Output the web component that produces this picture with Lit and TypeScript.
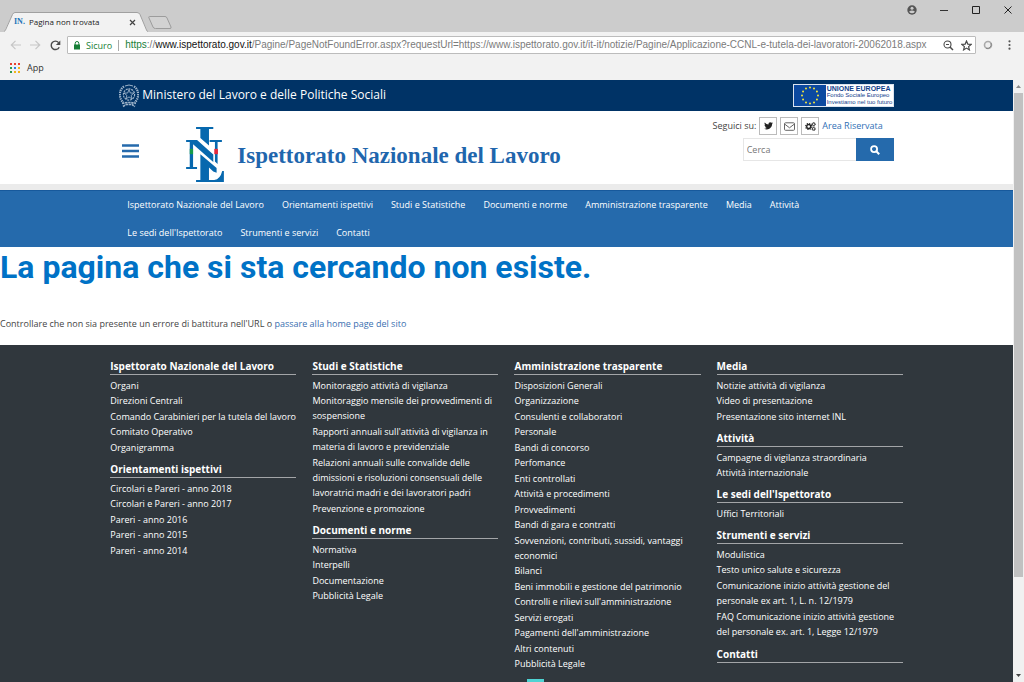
import { LitElement, html, css, svg } from "lit";
import { customElement } from "lit/decorators.js";
import { classMap } from "lit/directives/class-map.js";

type Section = { title: string; links: string[] };

const NAV = [
  "Ispettorato Nazionale del Lavoro",
  "Orientamenti ispettivi",
  "Studi e Statistiche",
  "Documenti e norme",
  "Amministrazione trasparente",
  "Media",
  "Attività",
  "Le sedi dell'Ispettorato",
  "Strumenti e servizi",
  "Contatti",
];

const COLUMNS: Section[][] = [
  [
    {
      title: "Ispettorato Nazionale del Lavoro",
      links: [
        "Organi",
        "Direzioni Centrali",
        "Comando Carabinieri per la tutela del lavoro",
        "Comitato Operativo",
        "Organigramma",
      ],
    },
    {
      title: "Orientamenti ispettivi",
      links: [
        "Circolari e Pareri - anno 2018",
        "Circolari e Pareri - anno 2017",
        "Pareri - anno 2016",
        "Pareri - anno 2015",
        "Pareri - anno 2014",
      ],
    },
  ],
  [
    {
      title: "Studi e Statistiche",
      links: [
        "Monitoraggio attività di vigilanza",
        "Monitoraggio mensile dei provvedimenti di sospensione",
        "Rapporti annuali sull'attività di vigilanza in materia di lavoro e previdenziale",
        "Relazioni annuali sulle convalide delle dimissioni e risoluzioni consensuali delle lavoratrici madri e dei lavoratori padri",
        "Prevenzione e promozione",
      ],
    },
    {
      title: "Documenti e norme",
      links: ["Normativa", "Interpelli", "Documentazione", "Pubblicità Legale"],
    },
  ],
  [
    {
      title: "Amministrazione trasparente",
      links: [
        "Disposizioni Generali",
        "Organizzazione",
        "Consulenti e collaboratori",
        "Personale",
        "Bandi di concorso",
        "Perfomance",
        "Enti controllati",
        "Attività e procedimenti",
        "Provvedimenti",
        "Bandi di gara e contratti",
        "Sovvenzioni, contributi, sussidi, vantaggi economici",
        "Bilanci",
        "Beni immobili e gestione del patrimonio",
        "Controlli e rilievi sull'amministrazione",
        "Servizi erogati",
        "Pagamenti dell'amministrazione",
        "Altri contenuti",
        "Pubblicità Legale",
      ],
    },
  ],
  [
    {
      title: "Media",
      links: [
        "Notizie attività di vigilanza",
        "Video di presentazione",
        "Presentazione sito internet INL",
      ],
    },
    {
      title: "Attività",
      links: ["Campagne di vigilanza straordinaria", "Attività internazionale"],
    },
    { title: "Le sedi dell'Ispettorato", links: ["Uffici Territoriali"] },
    {
      title: "Strumenti e servizi",
      links: [
        "Modulistica",
        "Testo unico salute e sicurezza",
        "Comunicazione inizio attività gestione del personale ex art. 1, L. n. 12/1979",
        "FAQ Comunicazione inizio attività gestione del personale ex. art. 1, Legge 12/1979",
      ],
    },
    { title: "Contatti", links: [] },
  ],
];

const APP_COLORS = [
  "#e8402f", "#e8402f", "#e8402f",
  "#2c9a4b", "#2f7de1", "#f3b51b",
  "#2c9a4b", "#f3b51b", "#f3b51b",
];

@customElement("browser-chrome")
export class BrowserChrome extends LitElement {
  static styles = css`
    :host {
      display: block;
      font: 9px/14px "Open Sans", sans-serif;
      color: #333;
    }
    button {
      display: flex;
      align-items: center;
      justify-content: center;
      padding: 0;
      border: 0;
      background: none;
      color: inherit;
      font: inherit;
    }
    svg {
      display: block;
    }
    .strip {
      display: flex;
      justify-content: space-between;
      height: 32px;
      background: #ccc;
    }
    .tabs {
      display: flex;
      align-items: flex-end;
      padding-left: 4px;
    }
    .tab {
      position: relative;
      display: flex;
      align-items: center;
      width: 144px;
      height: 20px;
      box-sizing: border-box;
      padding: 0 10px;
    }
    .shape {
      position: absolute;
      inset: 0;
    }
    .favicon,
    .title,
    .close {
      position: relative;
    }
    .favicon {
      width: 15px;
      font: bold 8px/14px "Liberation Serif", serif;
      color: #1c74b8;
    }
    .title {
      flex: 1;
      font-size: 8px;
      color: #222;
    }
    .close {
      width: 12px;
      height: 12px;
    }
    .new {
      height: 18px;
    }
    .window {
      display: flex;
    }
    .window button {
      width: 32px;
      height: 20px;
    }
    .toolbar {
      display: flex;
      align-items: center;
      padding: 4px 6px 3px 5px;
      background: #f2f2f2;
    }
    .tool {
      width: 20px;
      height: 18px;
    }
    .omnibox {
      flex: 1;
      min-width: 0;
      display: flex;
      align-items: center;
      height: 18px;
      box-sizing: border-box;
      margin-left: 2px;
      border: 1px solid #bcbcbc;
      border-radius: 1px;
      background: #fff;
    }
    .lock {
      padding: 0 6px;
    }
    .secure {
      padding-right: 6px;
      border-right: 1px solid #aaa;
      margin-right: 6px;
      line-height: 11px;
      color: #188038;
    }
    .url {
      flex: 1;
      min-width: 0;
      overflow: hidden;
      white-space: nowrap;
      outline: 0;
      font: 10px/16px "Liberation Sans", sans-serif;
      color: #7b7b7b;
    }
    .scheme {
      color: #188038;
    }
    .host {
      color: #111;
    }
    .inbox {
      width: 18px;
      height: 16px;
    }
    .ext {
      width: 24px;
      height: 18px;
    }
    .menu {
      width: 18px;
      height: 18px;
    }
    .bookmarks {
      display: flex;
      align-items: center;
      height: 21px;
      padding: 0 10px 2px;
      background: #f2f2f2;
    }
    .apps {
      gap: 7px;
    }
  `;

  render() {
    return html`
      <div class="strip">
        <div class="tabs">
          <div class="tab">
            <svg class="shape" width="144" height="20" viewBox="0 0 144 20">
              <path d="M0 20L8.500 2.500Q9.500 .5 11 .5H133Q135 .5 136 2.500L143 18.500L144 20Z" fill="#f2f2f2" />
              <path d="M0 19.500Q1 19 1.500 18L8.500 2.500Q9.500 .5 11 .5H133Q135 .5 136 2.500L142.500 18Q143 19.500 144 19.500" fill="none" stroke="#a0a0a0" />
            </svg>
            <span class="favicon">IN.</span>
            <span class="title">Pagina non trovata</span>
            <button class="close" aria-label="Chiudi scheda">
              <svg width="7" height="7" viewBox="0 0 7 7"><path d="M1 1L6 6M6 1L1 6" stroke="#444" stroke-width="1.200" /></svg>
            </button>
          </div>
          <button class="new" aria-label="Nuova scheda">
            <svg width="24" height="14" viewBox="0 0 24 14"><path d="M1.500 .5H17Q18.500 .5 19 2L23 11Q23.500 12.500 22 12.500H7.500Q5.500 12.500 5 11L1 2Q.3 .5 1.500 .5Z" fill="#d2d2d2" stroke="#9c9c9c" /></svg>
          </button>
        </div>
        <div class="window">
          <button aria-label="Profilo">
            <svg width="10" height="10" viewBox="0 0 10 10"><circle cx="5" cy="5" r="4.700" fill="#555" /><circle cx="5" cy="3.200" r="1.500" fill="#ccc" /><path d="M2 6.800Q5 4.300 8 6.800Q5 9.800 2 6.800Z" fill="#ccc" /></svg>
          </button>
          <button aria-label="Riduci a icona">
            <svg width="8" height="8" viewBox="0 0 8 8"><path d="M0 4.500H8" stroke="#333" /></svg>
          </button>
          <button aria-label="Ingrandisci">
            <svg width="8" height="8" viewBox="0 0 8 8"><path d="M.5 .5H7.500V7.500H.5Z" fill="none" stroke="#222" /></svg>
          </button>
          <button aria-label="Chiudi">
            <svg width="8" height="8" viewBox="0 0 8 8"><path d="M.5 .5L7.500 7.500M7.500 .5L.5 7.500" stroke="#222" /></svg>
          </button>
        </div>
      </div>
      <div class="toolbar">
        <button class="tool" aria-label="Indietro">
          <svg width="11" height="10" viewBox="0 0 11 10"><path d="M11 5H1.500M5.500 .8L1.300 5L5.500 9.200" fill="none" stroke="#c6c6c6" stroke-width="1.200" /></svg>
        </button>
        <button class="tool" aria-label="Avanti">
          <svg width="11" height="10" viewBox="0 0 11 10"><path d="M0 5H9.500M5.500 .8L9.700 5L5.500 9.200" fill="none" stroke="#c6c6c6" stroke-width="1.200" /></svg>
        </button>
        <button class="tool" aria-label="Ricarica">
          <svg width="11" height="11" viewBox="0 0 11 11"><path d="M9.200 7.200A4.200 4.200 0 1 1 8.600 2.600" fill="none" stroke="#4a4a4a" stroke-width="1.400" /><path d="M10.300 .5V4.900H5.900Z" fill="#4a4a4a" /></svg>
        </button>
        <div class="omnibox">
          <svg class="lock" width="6" height="9" viewBox="0 0 6 9"><path d="M0 3.500H6V8.500H0Z" fill="#188038" /><path d="M1.200 4V2.300A1.800 1.800 0 0 1 4.800 2.300V4" fill="none" stroke="#188038" /></svg>
          <span class="secure">Sicuro</span>
          <div class="url" role="textbox" aria-label="Indirizzo" tabindex="0"><span class="scheme">https</span>://<span class="host">www.ispettorato.gov.it</span>/Pagine/PageNotFoundError.aspx?requestUrl=https://www.ispettorato.gov.it/it-it/notizie/Pagine/Applicazione-CCNL-e-tutela-dei-lavoratori-20062018.aspx</div>
          <button class="inbox" aria-label="Zoom">
            <svg width="11" height="11" viewBox="0 0 11 11"><circle cx="4.500" cy="4.500" r="3.500" fill="none" stroke="#4a4a4a" stroke-width="1.100" /><path d="M7 7L10 10" stroke="#4a4a4a" stroke-width="1.500" /><path d="M3 4.500H6" stroke="#4a4a4a" /></svg>
          </button>
          <button class="inbox" aria-label="Preferiti">
            <svg width="11" height="11" viewBox="0 0 11 11"><path d="M5.500 1L6.800 4.100L10.200 4.400L7.600 6.600L8.400 9.900L5.500 8.100L2.600 9.900L3.400 6.600L.8 4.400L4.200 4.100Z" fill="none" stroke="#4a4a4a" stroke-width="1.200" /></svg>
          </button>
        </div>
        <button class="ext" aria-label="Estensione">
          <svg width="10" height="10" viewBox="0 0 10 10"><circle cx="5" cy="5" r="3.500" fill="#eee" stroke="#a9a9a9" stroke-width="1.600" /><path d="M8 3A4 4 0 0 1 3 8.300" fill="none" stroke="#858585" /></svg>
        </button>
        <button class="menu" aria-label="Menu">
          <svg width="3" height="10" viewBox="0 0 3 10"><circle cx="1.500" cy="1.300" r="1.100" fill="#555" /><circle cx="1.500" cy="5" r="1.100" fill="#555" /><circle cx="1.500" cy="8.700" r="1.100" fill="#555" /></svg>
        </button>
      </div>
      <div class="bookmarks">
        <button class="apps">
          <svg width="10" height="10" viewBox="0 0 10 10">
            ${APP_COLORS.map(
              (c, i) => svg`<rect x=${(i % 3) * 4} y=${Math.floor(i / 3) * 4} width="2" height="2" fill=${c} />`
            )}
          </svg>
          App
        </button>
      </div>
    `;
  }
}

@customElement("site-header")
export class SiteHeader extends LitElement {
  static styles = css`
    :host {
      display: block;
      font: 9px/14px "Open Sans", sans-serif;
    }
    a {
      color: inherit;
      text-decoration: none;
    }
    svg {
      display: block;
    }
    .ministry {
      background: #036;
    }
    .wrap {
      width: 80%;
      box-sizing: border-box;
      margin: 0 auto;
      padding: 0 18px;
      display: flex;
      justify-content: space-between;
      align-items: center;
    }
    .ministry .wrap {
      height: 31px;
    }
    .name {
      display: flex;
      align-items: center;
      gap: 3px;
      color: #fff;
      font-size: 12px;
      font-weight: 500;
    }
    .name span {
      padding-bottom: 2px;
    }
    .eu {
      display: flex;
      background: #fff;
      border: 1px solid #dbe4f0;
      color: #123f8c;
      font: 6px/7px "Liberation Sans", sans-serif;
    }
    .eulines {
      display: grid;
      width: 66px;
      padding-left: 1px;
      white-space: nowrap;
    }
    .eulines b {
      font-size: 7px;
    }
    .brand {
      border-bottom: 6px solid #ebebeb;
    }
    .brand .wrap {
      height: 73px;
      align-items: flex-start;
    }
    .left {
      display: flex;
      align-items: flex-start;
    }
    .burger {
      margin: 33px 47px 0 3px;
      padding: 0;
      border: 0;
      background: none;
    }
    .logo {
      display: flex;
      align-items: flex-start;
      gap: 13px;
      padding-top: 16px;
    }
    .logo span {
      padding-top: 16px;
      font: bold 23px/26px "Liberation Serif", serif;
      color: #1f66ad;
    }
    .right {
      display: flex;
      flex-direction: column;
      align-items: flex-end;
      gap: 3px;
      padding-top: 6px;
    }
    .follow {
      display: flex;
      align-items: center;
      gap: 3px;
      padding-right: 11px;
      color: #444;
    }
    .icon {
      display: flex;
      align-items: center;
      justify-content: center;
      width: 16px;
      height: 16px;
      border: 1px solid #bbb;
    }
    .area {
      color: #2f6fb5;
    }
    .search {
      display: flex;
    }
    .field {
      box-sizing: border-box;
      width: 113px;
      height: 23px;
      border: 1px solid #e6e6e6;
      border-right: 0;
      padding: 0 3px;
      font: inherit;
      color: #555;
    }
    .field::placeholder {
      color: #777;
    }
    .go {
      display: flex;
      align-items: center;
      justify-content: center;
      width: 38px;
      height: 23px;
      padding: 0;
      border: 0;
      background: #256aac;
    }
    .nav {
      background: #256aac;
      border-top: 1px solid #17599c;
      box-sizing: border-box;
    }
    .items {
      display: flex;
      flex-wrap: wrap;
      column-gap: 18px;
      width: 80%;
      box-sizing: border-box;
      margin: 0 auto;
      padding: 0 26px;
      color: #fff;
      font-weight: 500;
      line-height: 28px;
    }
  `;

  render() {
    const stars = Array.from({ length: 12 }, (_, i) => (i * Math.PI) / 6);
    return html`
      <div class="ministry">
        <div class="wrap">
          <a class="name" href="#">
            <svg width="20" height="24" viewBox="0 0 20 24" fill="none" stroke="#9db3c9">
              <circle cx="10" cy="10.500" r="5.600" stroke-width="1.200" stroke-dasharray="2 .8" />
              <path d="M10 5.500L11.300 9L15 9.100L12.100 11.400L13.100 15L10 12.900L6.900 15L7.900 11.400L5 9.100L8.700 9Z" stroke-width=".9" />
              <path d="M5 2.500C-.5 6 -.5 14.500 4.500 18.500M15 2.500C20.500 6 20.500 14.500 15.500 18.500" stroke-width="2.200" stroke-dasharray="1.400 .8" />
              <path d="M6 2Q10 0 14 2" />
              <path d="M3 19.500Q10 17.500 17 19.500M4 22.500L7 20.500H13L16 22.500" stroke-width="1.600" stroke-dasharray="2.500 .6" />
            </svg>
            <span>Ministero del Lavoro e delle Politiche Sociali</span>
          </a>
          <a class="eu" href="#">
            <svg width="32" height="21" viewBox="0 0 32 21">
              <rect width="32" height="21" fill="#0b49a0" />
              ${stars.map(
                (a) => svg`<circle cx=${16 + 8 * Math.sin(a)} cy=${10.5 - 8 * Math.cos(a)} r="1" fill="#f5e63c" />`
              )}
            </svg>
            <span class="eulines"><b>UNIONE EUROPEA</b><span>Fondo Sociale Europeo</span><span>Investiamo nel tuo futuro</span></span>
          </a>
        </div>
      </div>
      <div class="brand">
        <div class="wrap">
          <div class="left">
            <button class="burger" aria-label="Menu">
              <svg width="17" height="14" viewBox="0 0 17 14"><path d="M0 1.500H17M0 7H17M0 12.500H17" stroke="#256aac" stroke-width="2.400" /></svg>
            </button>
            <a class="logo" href="#">
              <svg width="38" height="55" viewBox="258 156 114 166">
                <g fill="#0768ae">
                  <path d="M288 156H340V162H327V212L301 189V162H288Z" />
                  <path d="M258 195H291L340 239V262L279 208V277H291V283H258V277H269V201H258Z" />
                  <path d="M329 195H366V201H353V268L345 260V201H329Z" />
                  <path d="M301 238L350 280V294L340 290L327 278V316H343Q361 314 367 289H372V322H288V316H301Z" />
                </g>
                <path d="M269 222H279V238H269Z" fill="#169b4a" />
                <path d="M343 222H354V238H343Z" fill="#e5293b" />
              </svg>
              <span>Ispettorato Nazionale del Lavoro</span>
            </a>
          </div>
          <div class="right">
            <div class="follow">
              <span>Seguici su:</span>
              <a class="icon" href="#" aria-label="Twitter">
                <svg width="9" height="8" viewBox="0 0 10 9"><path d="M0 7.500Q1.800 7.700 3 6.700Q1.500 6.500 1.100 5.200H2Q.5 4.600 .5 3L1.400 3.300Q0 2.100 .8 .6Q2.500 2.700 5 2.800Q4.700 .4 6.900 .3Q7.800 .3 8.400 .9L9.700 .4L8.900 1.600L10 1.300L9 2.400C9.200 6.500 4.500 10.200 0 7.500Z" fill="#222" /></svg>
              </a>
              <a class="icon" href="#" aria-label="Posta">
                <svg width="11" height="9" viewBox="0 0 11 9" fill="none" stroke="#666"><rect x=".5" y=".8" width="10" height="7.500" rx="1" /><path d="M.8 2.200L5.500 5.800L10.200 2.200" /></svg>
              </a>
              <a class="icon" href="#" aria-label="Servizi">
                <svg width="11" height="9" viewBox="0 0 12 10" fill="none" stroke="#222"><circle cx="4" cy="5" r="2.200" stroke-width="1.500" /><circle cx="4" cy="5" r="3.400" stroke-width="1.200" stroke-dasharray="1.400 1.270" /><circle cx="9.500" cy="2.500" r="1.400" /><circle cx="9.500" cy="2.500" r="2.100" stroke-width=".7" stroke-dasharray=".9 .75" /><circle cx="9.500" cy="7.600" r="1.400" /><circle cx="9.500" cy="7.600" r="2.100" stroke-width=".7" stroke-dasharray=".9 .75" /></svg>
              </a>
              <a class="area" href="#">Area Riservata</a>
            </div>
            <form class="search">
              <input class="field" type="search" placeholder="Cerca" aria-label="Cerca" />
              <button class="go" type="button" aria-label="Avvia ricerca">
                <svg width="10" height="10" viewBox="0 0 10 10"><circle cx="4.100" cy="4.100" r="3" fill="none" stroke="#fff" stroke-width="1.800" /><path d="M6.300 6.300L9.200 9.200" stroke="#fff" stroke-width="2" /></svg>
              </button>
            </form>
          </div>
        </div>
      </div>
      <nav class="nav">
        <div class="items">${NAV.map((n) => html`<a href="#">${n}</a>`)}</div>
      </nav>
    `;
  }
}

@customElement("site-footer")
export class SiteFooter extends LitElement {
  static styles = css`
    :host {
      display: block;
      background: #30373d;
      color: #fff;
      font: 9px/15px "Open Sans", sans-serif;
    }
    a {
      color: inherit;
      text-decoration: none;
    }
    .columns {
      display: grid;
      grid-template-columns: repeat(4, 1fr);
      column-gap: 16px;
      width: 80%;
      box-sizing: border-box;
      margin: 0 auto;
      padding: 13px 9px 8px;
    }
    .column {
      display: flex;
      flex-direction: column;
      gap: 6px;
    }
    .heading {
      margin: 0 0 3px;
      border-bottom: 1px solid #a3a5a8;
      font-size: 10px;
      font-weight: 700;
      line-height: 16px;
    }
    .list {
      margin: 0;
      padding: 0;
      list-style: none;
    }
    .item:nth-child(odd):not(:first-child) {
      margin-top: 1px;
    }
    .long {
      margin-bottom: 1px;
    }
    .badge {
      width: 17px;
      height: 20px;
      margin-left: 52%;
      background: #4fd3d3;
    }
  `;

  render() {
    return html`
      <div class="columns">
        ${COLUMNS.map(
          (sections) => html`<div class="column">
            ${sections.map(
              (s) => html`<section>
                <h2 class="heading"><a href="#">${s.title}</a></h2>
                <ul class="list">
                  ${s.links.map(
                    (l) => html`<li class=${classMap({ item: true, long: l.length > 52 })}><a href="#">${l}</a></li>`
                  )}
                </ul>
              </section>`
            )}
          </div>`
        )}
      </div>
      <div class="badge"></div>
    `;
  }
}

@customElement("app-root")
export class AppRoot extends LitElement {
  static styles = css`
    :host {
      display: flex;
      flex-direction: column;
      height: 100vh;
      overflow: hidden;
      background: #fff;
    }
    .view {
      flex: 1;
      min-height: 0;
      display: flex;
    }
    .page {
      flex: 1;
      min-width: 0;
      overflow: hidden;
      font: 9px/14px "Open Sans", sans-serif;
      color: #444;
    }
    .title {
      margin: 0;
      font: bold 32px/40px Roboto, sans-serif;
      color: #0072c6;
    }
    .message {
      margin: 0;
      padding: 30px 0 14px;
    }
    .home {
      color: #3a6fb0;
      text-decoration: none;
    }
    .scroll {
      display: flex;
      flex-direction: column;
      align-items: center;
      justify-content: space-between;
      width: 11px;
      background: #f1f1f1;
    }
    .arrow {
      display: block;
      padding: 5px 0;
    }
    .track {
      flex: 1;
      width: 9px;
    }
    .thumb {
      height: 84%;
      background: #c1c1c1;
    }
  `;

  render() {
    return html`
      <browser-chrome></browser-chrome>
      <div class="view">
        <div class="page">
          <site-header></site-header>
          <main>
            <h1 class="title">La pagina che si sta cercando non esiste.</h1>
            <p class="message">
              Controllare che non sia presente un errore di battitura nell'URL o
              <a class="home" href="#">passare alla home page del sito</a>
            </p>
          </main>
          <site-footer></site-footer>
        </div>
        <div class="scroll" aria-hidden="true">
          <svg class="arrow" width="5" height="3" viewBox="0 0 5 3"><path d="M0 3L2.500 0L5 3Z" fill="#8a8a8a" /></svg>
          <div class="track"><div class="thumb"></div></div>
          <svg class="arrow" width="5" height="3" viewBox="0 0 5 3"><path d="M0 0L2.500 3L5 0Z" fill="#444" /></svg>
        </div>
      </div>
    `;
  }
}
